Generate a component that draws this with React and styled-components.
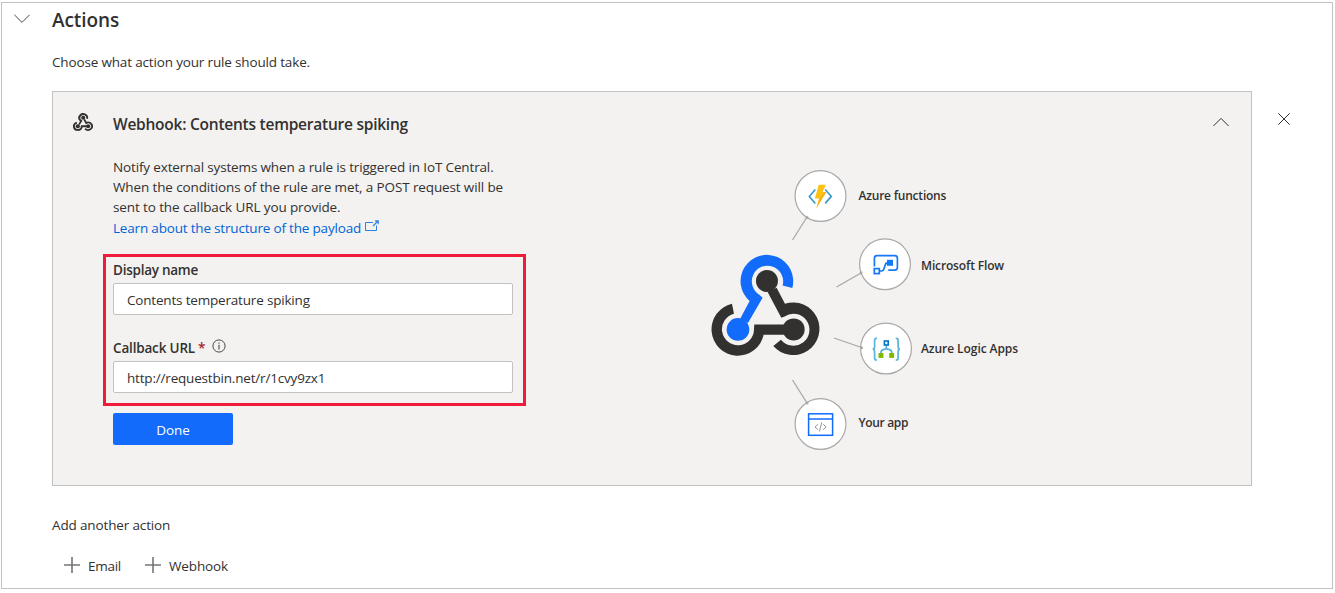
import React from "react";
import styled, { createGlobalStyle } from "styled-components";

const GlobalStyle = createGlobalStyle`
  *, *::before, *::after { box-sizing: border-box; }
  body {
    margin: 0;
    background: #fff;
    color: #323130;
    font-family: "Open Sans", "Noto Sans", sans-serif;
    font-size: 13.5px;
    line-height: 20px;
  }
`;

const Frame = styled.main`
  width: 1332px;
  height: 587px;
  margin: 2px 0 0 1px;
  border: 1px solid #c2c2c2;
  overflow: hidden;
`;

const SectionHeader = styled.header`
  display: flex;
  align-items: flex-start;
  padding: 4px 0 0 12px;
`;

const SectionChevron = styled.svg`
  width: 16px;
  height: 10px;
  margin: 7px 22px 0 0;
`;

const SectionTitle = styled.h2`
  margin: 0;
  font-size: 19px;
  font-weight: 600;
  line-height: 26px;
  letter-spacing: -0.1px;
`;

const SectionBody = styled.div`
  padding-left: 50px;
`;

const Paragraph = styled.p`
  margin: 0;
  white-space: nowrap;
  letter-spacing: ${(p) => p.$tracking || "-0.16px"};
`;

const Intro = styled(Paragraph)`
  margin-top: 19px;
`;

const CardRow = styled.div`
  display: flex;
  align-items: flex-start;
  margin-top: 19px;
`;

const Card = styled.section`
  width: 1200px;
  height: 395px;
  background: #f3f2f1;
  border: 1px solid #c2c2c2;
`;

const CardHeader = styled.div`
  display: flex;
  align-items: flex-start;
  height: 65px;
  padding: 21px 22px 0 20px;
`;

const SmallHook = styled.svg`
  width: 20px;
  height: 18px;
  margin-right: 20px;
`;

const CardTitle = styled.h3`
  flex: 1;
  margin: 1px 0 0;
  font-size: 15.5px;
  font-weight: 600;
  line-height: 20px;
  letter-spacing: -0.24px;
`;

const CardChevron = styled.svg`
  width: 16px;
  height: 10px;
  margin-top: 4px;
`;

const RemoveButton = styled.button`
  display: block;
  width: 12px;
  height: 12px;
  margin: 22px 0 0 26px;
  padding: 0;
  border: 0;
  background: none;
`;

const ButtonIcon = styled.svg`
  display: block;
  width: 100%;
  height: 100%;
`;

const CardBody = styled.div`
  display: flex;
  align-items: flex-start;
`;

const FormColumn = styled.div`
  width: 423px;
  margin-left: 50px;
`;

const Description = styled.div`
  padding-left: 10px;
`;

const LearnLink = styled.a`
  display: flex;
  align-items: flex-start;
  margin-top: 1px;
  color: #0064d6;
  white-space: nowrap;
  letter-spacing: -0.186px;
`;

const ExternalIcon = styled.svg`
  width: 14px;
  height: 12px;
  margin: 2px 0 0 4px;
`;

const Highlight = styled.div`
  height: 152px;
  margin-top: 16px;
  padding: 3px 10px 0 7px;
  border: 3px solid #ee1c3a;
`;

const Field = styled.div`
  height: 78px;
`;

const Label = styled.label`
  display: flex;
  align-items: flex-start;
  height: 23px;
  font-weight: 600;
  letter-spacing: ${(p) => p.$tracking};
`;

const Required = styled.span`
  margin-left: 3px;
  color: #a4262c;
`;

const InfoIcon = styled.svg`
  width: 14px;
  height: 14px;
  margin: 1px 0 0 7px;
`;

const Input = styled.input`
  display: block;
  width: 400px;
  height: 32px;
  padding: 2px 13px 0;
  background: #fff;
  border: 1px solid #c2c2c2;
  border-radius: 2px;
  color: #323130;
  font: inherit;
  letter-spacing: -0.185px;
  outline: 0;
`;

const DoneButton = styled.button`
  display: block;
  width: 120px;
  height: 32px;
  margin: 7px 0 0 10px;
  padding: 2px 0 0;
  background: #136bfb;
  border: 0;
  border-radius: 2px;
  color: #fff;
  font: inherit;
  letter-spacing: -0.1px;
`;

const Diagram = styled.div`
  position: relative;
  width: 340px;
  height: 300px;
  margin: 3px 0 0 174px;
`;

const DiagramArt = styled.svg`
  display: block;
  width: 340px;
  height: 300px;
`;

const NodeLabel = styled.span`
  position: absolute;
  left: ${(p) => p.$x}px;
  top: ${(p) => p.$y}px;
  font-size: 12px;
  font-weight: 600;
  line-height: 16px;
  white-space: nowrap;
  letter-spacing: ${(p) => p.$tracking}px;
`;

const AddTitle = styled(Paragraph)`
  margin-top: 29px;
`;

const AddRow = styled.div`
  display: flex;
  gap: 24px;
  margin: 21px 0 0 12px;
`;

const AddButton = styled.button`
  display: flex;
  align-items: flex-start;
  padding: 0;
  border: 0;
  background: none;
  color: #323130;
  font: inherit;
  letter-spacing: ${(p) => p.$tracking};
`;

const PlusIcon = styled.svg`
  width: 16px;
  height: 16px;
  margin: 1px 8px 0 0;
`;

function HookShape({ accent }) {
  return (
    <>
      <path fill={accent} d="M276 143A79 79 0 1 0 148 182L120 234L143 248L187 172L177 163A47 47 0 1 1 247 135Z" />
      <circle cx="113" cy="267" r="34" fill={accent} />
      <path fill="#323130" d="M229 142L254 190A79 79 0 1 1 219 317L242 298A48 48 0 1 0 253 228L243 232L202 155Z" />
      <circle cx="200" cy="122" r="33" fill="#323130" />
      <path fill="#323130" d="M95 190A79 79 0 1 0 190 283L280 283L280 252L162 252L161 267A48 48 0 1 1 101 220Z" />
      <circle cx="280" cy="267" r="33" fill="#323130" />
    </>
  );
}

function Plus() {
  return (
    <PlusIcon viewBox="0 0 16 16">
      <path d="M8 0V16M0 8H16" stroke="#767574" strokeWidth="1.6" />
    </PlusIcon>
  );
}

const nodes = [
  { cx: 120.5, cy: 36, line: "M92.5 80L107 57", dot: [107, 57.5] },
  { cx: 185, cy: 104.3, line: "M136.5 127L161 113", dot: [161, 112.7] },
  { cx: 186, cy: 188.5, line: "M134 178L161.5 187.5", dot: [161.5, 187.8] },
  { cx: 120.5, cy: 264, line: "M92.5 220L107 243", dot: [107, 243] },
];

function WebhookDiagram() {
  return (
    <Diagram>
      <DiagramArt viewBox="0 0 340 300">
        <g transform="translate(.3 80.4) scale(.33333)">
          <HookShape accent="#136bfb" />
        </g>
        {nodes.map((n) => (
          <g key={n.cy} stroke="#a9a8a7">
            <path d={n.line} strokeWidth="1.3" />
            <circle cx={n.cx} cy={n.cy} r="25.4" fill="#fff" strokeWidth="1.2" />
            <circle cx={n.dot[0]} cy={n.dot[1]} r="1.5" fill="#a9a8a7" stroke="none" />
          </g>
        ))}

        <g fill="none" stroke="#3999c6" strokeWidth="1.6">
          <path d="M115.3 29.5L109.3 36.4L115.3 43.4M125.2 29.5L131.3 36.4L125.2 43.4" />
        </g>
        <path fill="#fdc013" d="M118.7 24.8H126L122.4 32.1H126.2L116.3 48.2L119 38.6H114.9Z" />
        <path fill="#f9ae10" d="M124.4 32.1H126.2L116.3 48.2L119.5 39.5Z" />

        <g fill="none" stroke="#1479f5" strokeWidth="1.7">
          <path d="M174.4 106.4V98.3Q174.4 95.7 177 95.7H194.8Q197.4 95.7 197.4 98.3V107.6Q197.4 110.2 194.8 110.2H188.3" />
          <rect x="174.3" y="108.6" width="5" height="5" />
          <path d="M179.7 111H181.5Q183.3 111 183.9 109L185.2 105Q185.9 102.7 188 102.7" />
        </g>
        <rect x="187" y="99.8" width="6" height="6" fill="#1479f5" />

        <g fill="none" stroke="#59b4d9" strokeWidth="1.7">
          <path d="M177 178.4H176.3Q174.6 178.4 174.6 180.4V186.2Q174.6 189.2 172.7 189.2Q174.6 189.2 174.6 192.2V198Q174.6 200 176.3 200H177" />
          <path d="M195.7 178.4H196.4Q198.1 178.4 198.1 180.4V186.2Q198.1 189.2 200 189.2Q198.1 189.2 198.1 192.2V198Q198.1 200 196.4 200H195.7" />
          <path d="M186.3 185.5V187.2Q186.3 189 184 189.4Q181 189.9 181 192.3V194M186.3 187.2Q186.3 189 188.6 189.4Q191.7 189.9 191.7 192.3V194" />
        </g>
        <rect x="184.4" y="181" width="3.8" height="4" fill="#fff" stroke="#0072c6" strokeWidth="1.6" />
        <rect x="178.5" y="193" width="4.9" height="4.9" fill="#7fba00" />
        <rect x="189.2" y="193" width="4.9" height="4.9" fill="#7fba00" />

        <g fill="none" stroke="#136bfb" strokeWidth="1.5">
          <rect x="108.6" y="253.8" width="24" height="21.5" />
          <path d="M108.6 259H132.6" />
        </g>
        <path d="M118 264.3L115 267L118 269.7M123.2 264.3L126.2 267L123.2 269.7M121.8 262.4L119.4 271.5" fill="none" stroke="#949392" strokeWidth="1" />
      </DiagramArt>
      <NodeLabel $x={158.5} $y={28} $tracking={-0.22}>Azure functions</NodeLabel>
      <NodeLabel $x={221} $y={98} $tracking={-0.15}>Microsoft Flow</NodeLabel>
      <NodeLabel $x={221} $y={181} $tracking={-0.07}>Azure Logic Apps</NodeLabel>
      <NodeLabel $x={158.5} $y={255} $tracking={-0.34}>Your app</NodeLabel>
    </Diagram>
  );
}

export default function App() {
  return (
    <>
      <GlobalStyle />
      <Frame>
        <SectionHeader>
          <SectionChevron viewBox="0 0 16 10">
            <path d="M.4 .8L8 8.4L15.6 .8" fill="none" stroke="#4a4948" />
          </SectionChevron>
          <SectionTitle>Actions</SectionTitle>
        </SectionHeader>
        <SectionBody>
          <Intro>Choose what action your rule should take.</Intro>
          <CardRow>
            <Card>
              <CardHeader>
                <SmallHook viewBox="35 42 323 306" preserveAspectRatio="none">
                  <HookShape accent="#323130" />
                </SmallHook>
                <CardTitle>Webhook: Contents temperature spiking</CardTitle>
                <CardChevron viewBox="0 0 16 10">
                  <path d="M.4 9L8 1.4L15.6 9" fill="none" stroke="#323130" />
                </CardChevron>
              </CardHeader>
              <CardBody>
                <FormColumn>
                  <Description>
                    <Paragraph $tracking="-0.145px">Notify external systems when a rule is triggered in IoT Central.</Paragraph>
                    <Paragraph $tracking="-0.127px">When the conditions of the rule are met, a POST request will be</Paragraph>
                    <Paragraph $tracking="-0.113px">sent to the callback URL you provide.</Paragraph>
                    <LearnLink>
                      Learn about the structure of the payload
                      <ExternalIcon viewBox="0 0 14 12" fill="none" stroke="#2f7fdd">
                        <path d="M8 2.5H.5V10.5H11.5V5.5" />
                        <path d="M8 6L12.5 1.5M10 .9H13.2V4.2" strokeWidth="1.2" />
                      </ExternalIcon>
                    </LearnLink>
                  </Description>
                  <Highlight>
                    <Field>
                      <Label htmlFor="display-name" $tracking="-0.25px">Display name</Label>
                      <Input id="display-name" defaultValue="Contents temperature spiking" />
                    </Field>
                    <Field>
                      <Label htmlFor="callback-url" $tracking="-0.173px">
                        Callback URL<Required>*</Required>
                        <InfoIcon viewBox="0 0 14 14">
                          <circle cx="7" cy="7" r="6.1" fill="none" stroke="#4a4948" />
                          <path d="M7 3.4V4.8M7 5.8V10.4" stroke="#4a4948" strokeWidth="1.1" />
                        </InfoIcon>
                      </Label>
                      <Input id="callback-url" defaultValue="http://requestbin.net/r/1cvy9zx1" />
                    </Field>
                  </Highlight>
                  <DoneButton>Done</DoneButton>
                </FormColumn>
                <WebhookDiagram />
              </CardBody>
            </Card>
            <RemoveButton aria-label="Remove action">
              <ButtonIcon viewBox="0 0 12 12">
                <path d="M.3 .3L11.7 11.7M11.7 .3L.3 11.7" stroke="#323130" />
              </ButtonIcon>
            </RemoveButton>
          </CardRow>
          <AddTitle $tracking="-0.14px">Add another action</AddTitle>
          <AddRow>
            <AddButton $tracking="-0.26px"><Plus />Email</AddButton>
            <AddButton $tracking="-0.13px"><Plus />Webhook</AddButton>
          </AddRow>
        </SectionBody>
      </Frame>
    </>
  );
}
